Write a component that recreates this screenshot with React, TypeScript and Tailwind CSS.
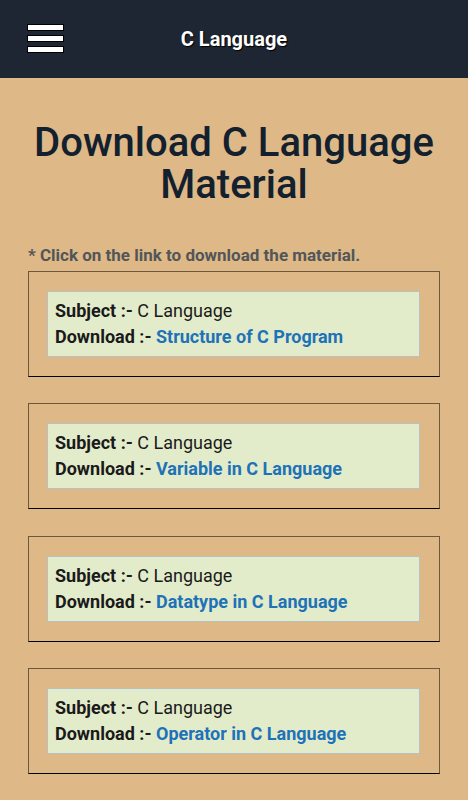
const items = [
  'Structure of C Program',
  'Variable in C Language',
  'Datatype in C Language',
  'Operator in C Language',
]

export default function App() {
  return (
    <div className="min-h-[800px] bg-[#deb887] font-['Roboto',sans-serif]">
      <header className="h-[78px] bg-[#1d2632] flex items-center relative">
        <div className="absolute left-[27px] top-[24px] flex flex-col gap-[4px]">
          <span className="block w-[37px] h-[7px] bg-white border border-black" />
          <span className="block w-[37px] h-[7px] bg-white border border-black" />
          <span className="block w-[37px] h-[7px] bg-white border border-black" />
        </div>
        <h2 className="w-full text-center text-white font-bold text-[20px] [text-shadow:1px_1px_1px_#000]">C Language</h2>
      </header>
      <main className="px-[28px]">
        <h1 className="pt-[44px] text-center text-[40px] leading-[42px] font-medium text-[#13202e] -mx-[20px]">
          Download C Language Material
        </h1>
        <p className="mt-[37px] text-[17px] font-bold text-[#525659]">* Click on the link to download the material.</p>
        <div className="mt-[2px] flex flex-col gap-[26.5px]">
          {items.map((t) => (
            <div key={t} className="border border-[#6b583f] border-b-black pl-[18px] pr-[19px] py-[19px]">
              <div className="bg-[#e3ecca] border border-[#b8bfc0] px-[7px] py-[6px] text-[18px] leading-[26px] text-[#1a1a1a]">
                <div><b>Subject :-</b> C Language</div>
                <div>
                  <b>Download :-</b> <a href="#" className="font-bold text-[#1d72b8]">{t}</a>
                </div>
              </div>
            </div>
          ))}
        </div>
      </main>
    </div>
  )
}
